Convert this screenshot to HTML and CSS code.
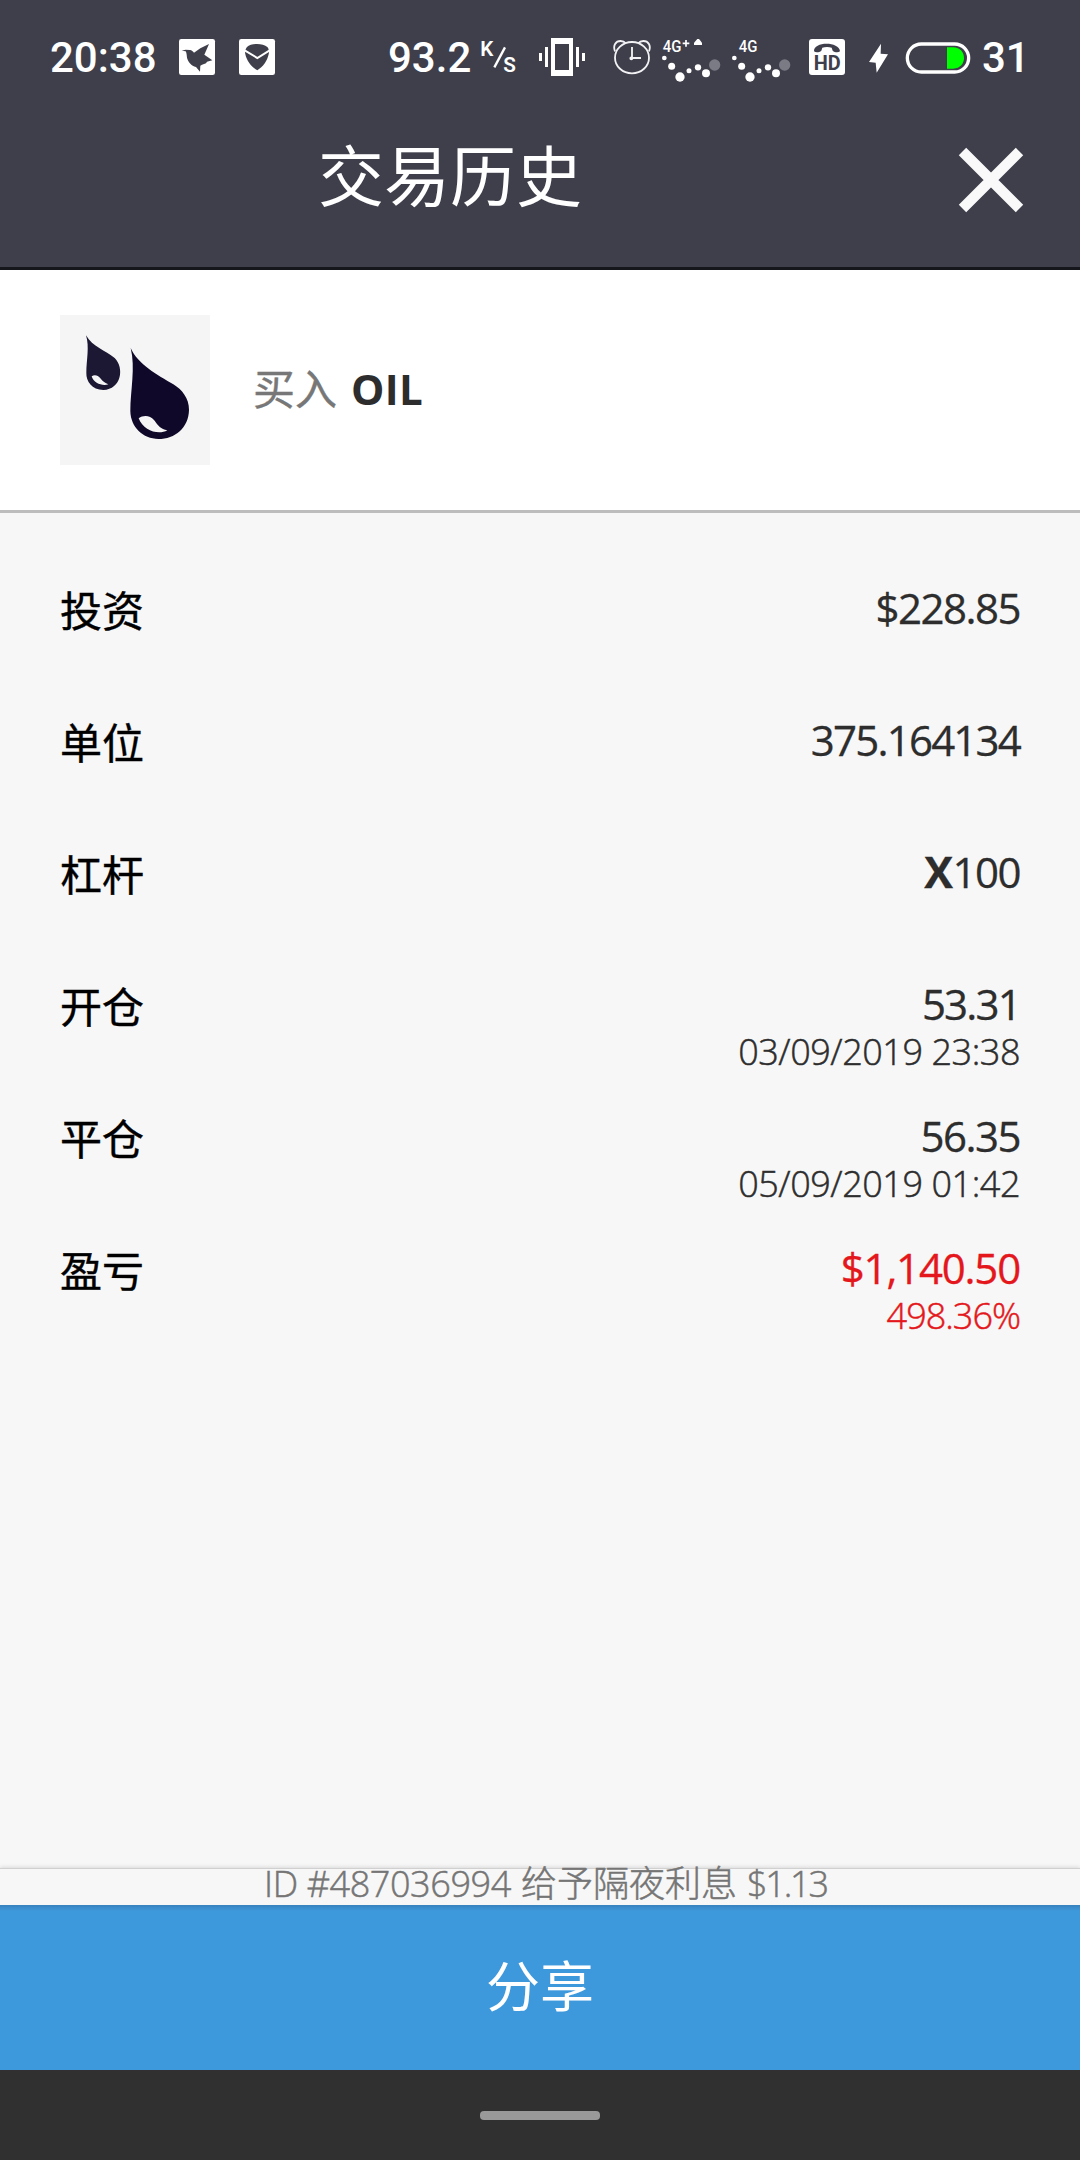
FILE: index.html
```html
<!DOCTYPE html>
<html lang="zh-CN">
<head>
<meta charset="utf-8">
<title>交易历史</title>
<link rel="stylesheet" href="styles.css">
</head>
<body>
<div class="screen">
  <header class="header">
    <div class="status">
      <span class="clock">20:38</span>
      <svg class="ic w60" viewBox="447 0 180 240"><rect x="447" y="57" width="108" height="108" rx="7" fill="#fff"/><path d="M455 92l12-3 13 1c5 1 9 4 12 8l19-13 26-13-14 32 24 17-16 4-3 5-12 4-5 3-1 18-12-14c-14-4-24-15-27-28-1-8-1-14-4-19z" fill="#3e3f4b"/></svg>
      <svg class="ic w150" viewBox="627 0 450 240"><rect x="627" y="57" width="108" height="108" rx="7" fill="#fff"/><path d="M651 81c12-12 48-12 61 0 5 6 6 14 4 22-4 19-17 38-34 48-18-10-32-29-36-48-2-8 0-16 5-22z" fill="#3e3f4b"/><path d="M644 91l38 23 37-23" fill="none" stroke="#fff" stroke-width="6"/></svg>
      <span class="speed">93.2</span>
      <svg class="ic w58" viewBox="333 0 174 240"><text x="331" y="109" class="unit">K</text><path d="M373 142L405 82" stroke="#fff" stroke-width="7"/><text x="400" y="157" class="unit">S</text></svg>
      <svg class="ic w73" viewBox="507 0 219 240" fill="#fff"><path d="M543 54h66v114h-66zM555 72v78h42V72z" fill-rule="evenodd"/><path d="M507 99h9v24h-9zM525 81h9v60h-9zM618 81h9v60h-9zM636 99h9v24h-9z"/></svg>
      <svg class="ic w50" viewBox="726 0 150 240" fill="none" stroke="#f2f2f4" stroke-width="5.500"><ellipse cx="786" cy="113" rx="51" ry="47"/><path d="M735 94c-7-18 2-31 17-31 8 0 12 3 15 7M837 94c7-18-2-31-17-31-8 0-12 3-15 7M786 81v33h27"/><circle cx="784" cy="115" r="3"/></svg>
      <svg class="ic w70" viewBox="876 0 210 240" fill="#fff"><text x="878" y="96" class="net" textLength="56" lengthAdjust="spacingAndGlyphs">4G</text><path d="M948 60v20M938 70h20" stroke="#fff" stroke-width="5"/><path d="M972 75v-7l10-11h5l9 11v7z"/><circle cx="883" cy="114" r="7"/><circle cx="905" cy="139" r="10.500"/><circle cx="930" cy="171" r="14"/><circle cx="957" cy="152" r="7.500"/><circle cx="984" cy="142" r="9.500"/><circle cx="1008" cy="160" r="12"/><circle cx="1034" cy="135" r="17" fill="#7a7b84"/></svg>
      <svg class="ic w77" viewBox="36 0 231 240" fill="#fff"><text x="56" y="96" class="net" textLength="56" lengthAdjust="spacingAndGlyphs">4G</text><circle cx="43" cy="114" r="7"/><circle cx="65" cy="139" r="10.500"/><circle cx="90" cy="171" r="14"/><circle cx="117" cy="152" r="7.500"/><circle cx="144" cy="142" r="9.500"/><circle cx="168" cy="160" r="12"/><circle cx="194" cy="135" r="17" fill="#7a7b84"/></svg>
      <svg class="ic w59" viewBox="267 0 177 240"><rect x="267" y="57" width="108" height="108" rx="9" fill="#fff"/><path d="M282 94c-2-30 76-30 78 0-6 5-16 3-22-2l-3-9c-8-3-20-3-28 0l-3 9c-6 5-16 7-22 2z" fill="#3e3f4b"/><text x="281" y="150" class="hd" textLength="81" lengthAdjust="spacingAndGlyphs">HD</text></svg>
      <svg class="ic w37" viewBox="444 0 111 240"><path d="M483 71l-36 55 20 2 3 30 34-55-22-2z" fill="#fff"/></svg>
      <svg class="ic w77" viewBox="555 0 231 240"><path d="M681 82h18c44 0 44 64 0 64h-18z" fill="#0f0"/><rect x="562" y="72" width="184" height="84" rx="42" fill="none" stroke="#fff" stroke-width="10"/></svg>
      <span>31</span>
    </div>
    <div class="bar">
      <h1 class="title">交易历史</h1>
      <svg class="close" viewBox="0 0 66 66"><path d="M4.500 4.500l57 57M61.500 4.500l-57 57" stroke="#f9f9fa" stroke-width="10.500"/></svg>
    </div>
  </header>
  <section class="asset">
    <svg class="logo" viewBox="60 45 450 450"><path d="M138 106c20 36 58 44 86 68 30 30 20 94-34 96-34-1-52-26-51-52 0-36 10-77-1-112z" fill="#1c1733"/><path d="M272 144c22 50 80 80 128 109 26 16 47 42 47 76-1 54-42 88-92 88-46-1-83-35-84-84 0-60 16-130 1-189z" fill="#0f0828"/><path d="M296 355c14-10 34-9 46 5 13 18 20 27 40 31-26 15-72 2-86-36zM155 229c9-6 19-3 26 6 8 10 14 15 24 18-16 6-44-2-50-24z" fill="#f5f5f5"/></svg>
    <div class="asset-name"><span class="side">买入</span><b class="symbol">OIL</b></div>
  </section>
  <main class="details">
    <div class="row"><span class="label">投资</span><div class="value"><span class="main">$228.85</span></div></div>
    <div class="row"><span class="label">单位</span><div class="value"><span class="main long">375.164134</span></div></div>
    <div class="row"><span class="label">杠杆</span><div class="value"><span class="main"><b class="times">X</b>100</span></div></div>
    <div class="row"><span class="label">开仓</span><div class="value"><span class="main long">53.31</span><span class="sub">03/09/2019 23:38</span></div></div>
    <div class="row"><span class="label">平仓</span><div class="value"><span class="main">56.35</span><span class="sub">05/09/2019 01:42</span></div></div>
    <div class="row"><span class="label">盈亏</span><div class="value red"><span class="main profit">$1,140.50</span><span class="sub percent">498.36%</span></div></div>
  </main>
  <div class="note"><span class="note-id">ID #487036994</span><span class="note-zh">给予隔夜利息</span><span class="note-amt">$1.13</span></div>
  <button class="share">分享</button>
  <div class="nav"><div class="handle"></div></div>
</div>
</body>
</html>
```
FILE: styles.css
```css
* { box-sizing: border-box; }
body { margin: 0; background: #f7f7f7; }
.screen {
  width: 1080px;
  height: 2160px;
  display: flex;
  flex-direction: column;
  overflow: hidden;
  background: #f7f7f7;
  font-family: "Open Sans", "Noto Sans CJK SC", sans-serif;
  color: #2d2d2d;
}
.header {
  height: 270px;
  flex: none;
  background: #3e3f4b;
  border-bottom: 3px solid #15161b;
  color: #fff;
}
.status {
  display: flex;
  height: 100px;
  padding: 20px 0 0 50px;
  font: 500 42px/76px Roboto, sans-serif;
}
.status > * { flex: none; }
.clock { width: 129px; }
.speed { width: 92px; margin-left: -1px; margin-right: 1px; }
.ic { height: 80px; display: block; }
.w37 { width: 37px; }
.w50 { width: 50px; }
.w58 { width: 58px; }
.w59 { width: 59px; }
.w60 { width: 60px; }
.w70 { width: 70px; }
.w73 { width: 73px; }
.w77 { width: 77px; }
.w150 { width: 150px; }
.unit { font: 600 62px Roboto, sans-serif; fill: #fff; }
.net { font: 500 48px Roboto, sans-serif; }
.hd { font: 700 63px Roboto, sans-serif; fill: #3e3f4b; }
.bar {
  display: flex;
  height: 167px;
  padding: 24px 56px 0 318px;
  align-items: flex-start;
  justify-content: space-between;
}
.title {
  margin: 0;
  font: 400 66px/96px "Noto Sans CJK SC", sans-serif;
}
.close { width: 66px; height: 66px; margin-top: 23px; }
.asset {
  display: flex;
  flex: none;
  height: 243px;
  padding: 45px 60px 0;
  gap: 43px;
  background: #fff;
  border-bottom: 3px solid #bdbdbd;
}
.logo { width: 150px; height: 150px; background: #f5f5f5; }
.asset-name {
  display: flex;
  height: 150px;
  align-items: baseline;
  padding-top: 42px;
  font-size: 42px;
  line-height: 60px;
}
.side {
  width: 98px;
  color: #777;
  font-family: "Noto Sans CJK SC", sans-serif;
  -webkit-text-stroke: 0.4px #777;
}
.symbol { letter-spacing: 0.3px; }
.details { flex: 1; padding: 69px 60px 0; }
.row { display: flex; justify-content: space-between; height: 132px; }
.label {
  font: 400 42px/54px "Noto Sans CJK SC", sans-serif;
  color: #000;
  -webkit-text-stroke: 0.4px #000;
}
.value {
  display: flex;
  flex-direction: column;
  align-items: flex-end;
  padding-top: 1px;
}
.main {
  font-size: 42px;
  line-height: 49px;
  letter-spacing: -1.500px;
  -webkit-text-stroke: 0.3px currentColor;
}
.long { letter-spacing: -1.800px; }
.profit { letter-spacing: -1.200px; }
.times { font-size: 43px; line-height: 40px; margin-right: 1px; }
.sub {
  font-size: 36px;
  line-height: 48px;
  font-weight: 300;
  letter-spacing: -0.450px;
  -webkit-text-stroke: 0.5px currentColor;
}
.percent { letter-spacing: -1px; }
.red { color: #e4171c; }
.note {
  display: flex;
  flex: none;
  height: 37px;
  padding-left: 264px;
  align-items: baseline;
  border-top: 1px solid #d0d0d0;
  box-shadow: 0 -1px 4px rgba(0, 0, 0, 0.12);
  font-size: 36px;
  line-height: 24px;
  font-weight: 300;
  color: #757575;
  white-space: nowrap;
  -webkit-text-stroke: 0.5px currentColor;
}
.note-id { width: 257px; letter-spacing: -0.400px; }
.note-zh {
  width: 226px;
  font: 300 36px/24px "Noto Sans CJK SC", sans-serif;
}
.note-amt { letter-spacing: -2.200px; }
.share {
  flex: none;
  height: 165px;
  border: 0;
  padding: 0 0 8px;
  background: linear-gradient(#3782bd, #3e99dc 6px);
  color: #fff;
  font: 400 54px/80px "Noto Sans CJK SC", sans-serif;
}
.nav {
  display: flex;
  flex: none;
  height: 90px;
  padding-top: 41px;
  justify-content: center;
  background: #303030;
}
.handle { width: 120px; height: 9px; border-radius: 4px; background: #999; }
```
